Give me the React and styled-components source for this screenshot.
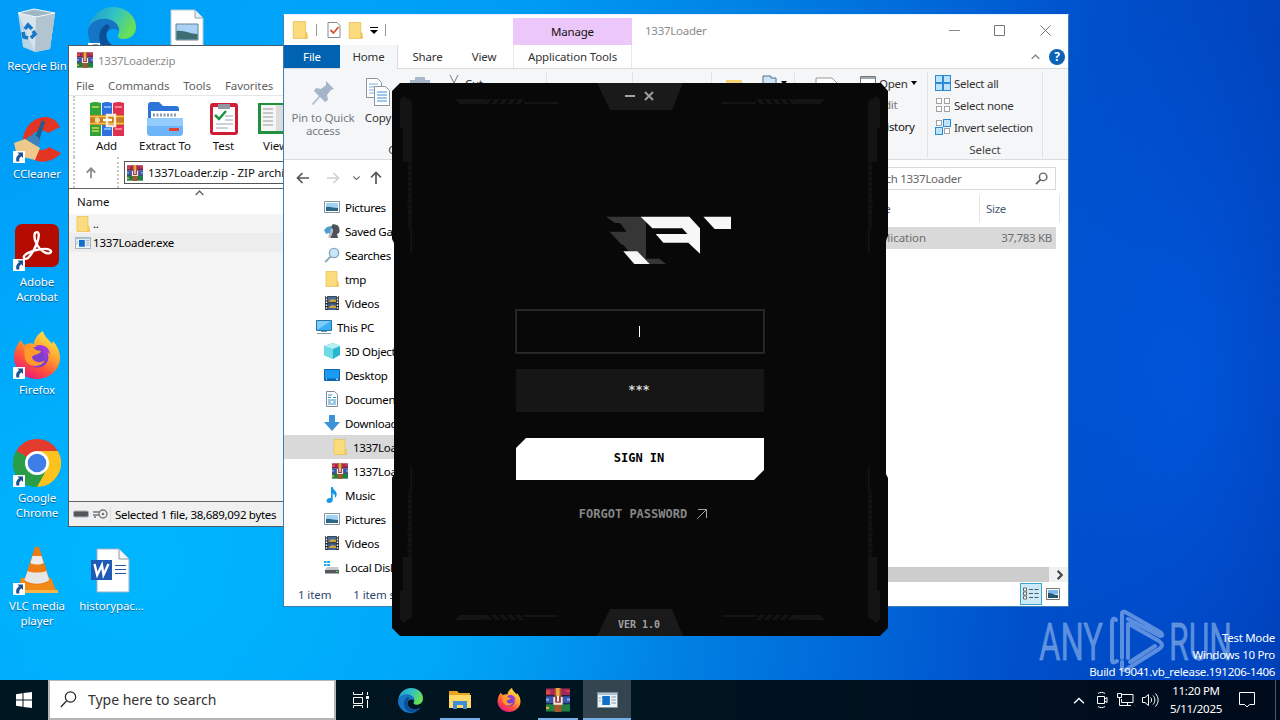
import React from 'react';
import styled, { createGlobalStyle, css } from 'styled-components';

const uiFont = '"Noto Sans", "Open Sans", sans-serif';
const monoFont = '"DejaVu Sans Mono", "Liberation Mono", monospace';

const GlobalStyle = createGlobalStyle`
    * { box-sizing: border-box; }
    body {
        margin: 0;
        overflow: hidden;
        font-family: ${uiFont};
        font-size: 11.5px;
        letter-spacing: -0.3px;
        color: #111;
    }
    svg { display: block; flex: none; }
`

/* ---------- icons ---------- */

const Folder = ({ size = 16 }) => (
    <svg width={size} height={size} viewBox="0 0 16 16">
        <path d="M2 .5h11v12l1.500 1v2H2z" fill="#fbdc7c" stroke="#e6bd52" strokeWidth=".7" />
        <path d="M13 9.500l1.700 1v5H12" fill="#f3c95c" />
    </svg>
)

const Rar = ({ size = 16 }) => (
    <svg width={size} height={size} viewBox="0 0 16 16">
        <path d="M0 .3h16v5H0z" fill="#a3265c" />
        <path d="M0 5.500h16v5H0z" fill="#3957a8" />
        <path d="M0 10.700h16v5H0z" fill="#238044" />
        <path d="M0 1.500h3V4H0zM13 1.500h3v1h-3z" fill="#dc4a3c" />
        <path d="M0 7h2v1.500H0zM14 7h2v1.500h-2z" fill="#8aa9e8" />
        <path d="M0 12.500h2V14H0z" fill="#d4b537" />
        <path d="M0 5h16M0 10.500h16" stroke="#20202c" strokeWidth=".6" />
        <path d="M5.700 0h4.600v16H5.700z" fill="#a5562a" />
        <path d="M6.700 0h2.400v5H6.700z" fill="#f1a63b" />
        <path d="M5.500 6v4.500h5V6" fill="#a33" stroke="#f4e9df" strokeWidth="1.200" />
        <path d="M8 5v4" stroke="#fff" strokeWidth="1.200" />
    </svg>
)

const Exe = ({ width = 16, height = 12 }) => (
    <svg width={width} height={height} viewBox="0 0 22 16" preserveAspectRatio="none">
        <path d="M.5.5h21v15H.5z" fill="#eef4f8" stroke="#7f93a3" />
        <path d="M1 1h20v2H1z" fill="#a9c4d6" />
        <path d="M5.500 4h8v9h-8z" fill="#0f6fc9" />
        <path d="M15 5h5M15 8h5M15 11h5M2 6h2M2 9h2" stroke="#8293a0" />
    </svg>
)

const Picture = () => (
    <svg width="16" height="16" viewBox="0 0 16 16">
        <path d="M.5 2.500h15v11H.5z" fill="#fff" stroke="#8795a1" />
        <path d="M2 4h12v8H2z" fill="#9fd3f5" />
        <path d="M2 8c4-1 7 1 12 1v3H2z" fill="#2f6787" />
    </svg>
)

const Film = () => (
    <svg width="16" height="16" viewBox="0 0 16 16">
        <path d="M1 1h14v14H1z" fill="#2c3036" />
        <path d="M4 1.600h8v5.700H4z" fill="#4a6c9b" />
        <path d="M4 8.300h8V15H4z" fill="#3d5d8e" />
        <path d="M5 6l3-2 4 1v2H5zM5 12l3-2 4 1v2H5z" fill="#c9a536" />
        <path d="M2.500 1v14M13.500 1v14" stroke="#fff" strokeWidth="1.400" strokeDasharray="1.500 1.300" />
    </svg>
)

const Search = ({ size = 16, color = '#8aa5b8', fill = '#c8e8fb', w = 1.4 }) => (
    <svg width={size} height={size} viewBox="0 0 16 16">
        <circle cx="10" cy="6" r="4.600" fill={fill} stroke={color} strokeWidth={w} />
        <path d="M6.700 9.500L1.200 15" stroke={color} strokeWidth={w + 0.4} />
    </svg>
)

const Games = () => (
    <svg width="16" height="16" viewBox="0 0 16 16">
        <path d="M0 7l3-3 4-1 1 5-2 4-1-2-3 1z" fill="#4f9fd4" />
        <path d="M7 4l2-3 4 1c3 2 3 6 2 8l-2 1 1 4H6l2-4z" fill="#4e5359" />
        <path d="M7 5l2 1v3l-3 6-2-1 2-4z" fill="#b4bcc2" />
    </svg>
)

const Monitor = () => (
    <svg width="16" height="16" viewBox="0 0 16 16">
        <path d="M.5 1.500h15v10H.5z" fill="#38b0f2" stroke="#2274a8" />
        <path d="M1 2h14L1 11z" fill="#7bcdf8" />
        <path d="M5 12h6v1H5zM1 14h14v1H1z" fill="#7d99ac" />
    </svg>
)

const Cube = () => (
    <svg width="16" height="16" viewBox="0 0 16 16">
        <path d="M0 3l9-3 7 3v9l-7 4-9-4z" fill="#29b7cf" />
        <path d="M0 3l9 3v10l-9-4z" fill="#6fdbe6" />
        <path d="M0 3l9-3 7 3-7 3z" fill="#b7f0f4" />
    </svg>
)

const DesktopIcon = () => (
    <svg width="16" height="16" viewBox="0 0 16 16">
        <path d="M.5 2.500h15v11H.5z" fill="#1a9bf1" stroke="#0b67ae" />
        <path d="M1 11.500h14V13H1z" fill="#0b62b0" />
        <path d="M2 12.200h1M12 12.200h2" stroke="#fff" />
    </svg>
)

const DocumentIcon = () => (
    <svg width="16" height="16" viewBox="0 0 16 16">
        <path d="M2.500.5h8l3 3v12h-11z" fill="#fff" stroke="#7c8b97" />
        <path d="M4 4h4M4 6.500h3M9 6.500h3M4 9h8M4 11h3M9 11h3M4 13h8" stroke="#3991c6" strokeWidth="1.200" />
    </svg>
)

const Download = () => (
    <svg width="16" height="16" viewBox="0 0 16 16">
        <path d="M5 0h6v7h5l-8 9-8-9h5z" fill="#3b92d8" />
    </svg>
)

const MusicIcon = () => (
    <svg width="16" height="16" viewBox="0 0 16 16">
        <path d="M7 0h1.700c.5 3 4 4 4 7 0 2-.7 3-1.700 4 .4-3-1-4-2.300-4.500V13c0 2-1.700 3-3.500 3S2.500 15 2.500 13.500 4.500 10.500 7 11z" fill="#1698e5" />
    </svg>
)

const Drive = () => (
    <svg width="16" height="16" viewBox="0 0 16 16">
        <path d="M0 2h2.500v2H0zM3.200 2H6v2H3.200zM0 5h2.500v2H0zM3.200 5H6v2H3.200z" fill="#18a9ea" />
        <path d="M3 8h11l1 3H1z" fill="#c5c9cc" />
        <path d="M1 11h14v3.500H1z" fill="#53585c" />
        <path d="M12 12.500h2" stroke="#4fe06a" />
    </svg>
)

const Edge = ({ size = 24 }) => (
    <svg width={size} height={size} viewBox="0 0 48 48">
        <defs>
            <linearGradient id="edgeTop" x1="0" y1="0" x2="1" y2=".4">
                <stop offset="0" stopColor="#1f96d0" />
                <stop offset=".55" stopColor="#32c3c4" />
                <stop offset="1" stopColor="#67df57" />
            </linearGradient>
        </defs>
        <path d="M1 21C3 8 13 0 25 0c13 0 23 9 23 20 0 8-6 12-12 12-5 0-7-2-6-4 3-4 1-13-9-13C11 15 3 18 1 21z" fill="url(#edgeTop)" />
        <path d="M0 24c1-8 9-13 19-12 8 1 12 6 12 12-6-5-15 0-13 9 2 8 11 11 23 6-5 7-12 10-19 9C9 47 0 37 0 24z" fill="#1576c6" />
        <path d="M19 17c-8 4-10 14-5 22 3 5 8 8 13 8 8-1 14-4 17-10-6 4-14 5-20 1-7-5-7-13-2-18-1-2-2-2-3-3z" fill="#0d4f97" />
    </svg>
)

const Firefox = ({ size = 24 }) => (
    <svg width={size} height={size} viewBox="0 0 48 48">
        <defs>
            <linearGradient id="foxBody" x1=".85" y1="0" x2=".25" y2="1">
                <stop offset="0" stopColor="#fff24a" />
                <stop offset=".4" stopColor="#ffa52f" />
                <stop offset=".7" stopColor="#ff4f3c" />
                <stop offset="1" stopColor="#e31587" />
            </linearGradient>
        </defs>
        <path d="M8 9c1 3 2 4 4 5 3-2 7-2 9-1 0-5 4-10 9-13 1 6 6 8 9 13l1-3c5 6 7 11 7 17C47 39 36 48 24 48S1 39 1 26C1 20 4 13 8 9z" fill="url(#foxBody)" />
        <circle cx="25" cy="26" r="10.500" fill="#7b3fd0" />
        <path d="M11 17c4-3 9-2 12 2l5 1c-1 4-7 3-9 6 1 5 8 7 13 3-3 8-17 8-20-1-1-4 0-7-1-11z" fill="#ff9a2c" />
        <path d="M22 15c8-3 15 2 15 9-1-2-2-3-3-3 1 4 0 7-2 9 0-7-3-13-10-15z" fill="#a43ad6" />
    </svg>
)

const Chrome = () => (
    <svg width="48" height="48" viewBox="0 0 48 48">
        <path d="M24 24L3.200 12A24 24 0 0 1 44.800 12z" fill="#e33b2e" />
        <path d="M24 24L44.800 12A24 24 0 0 1 24 48z" fill="#fcc31e" />
        <path d="M24 24v24A24 24 0 0 1 3.200 12z" fill="#2a9d48" />
        <path d="M24 12h20.800L34 30 24 48z" fill="#fcc31e" />
        <path d="M3.200 12L14 30l10 6 10-6-10 18A24 24 0 0 1 3.200 12z" fill="#2a9d48" />
        <circle cx="24" cy="24" r="12" fill="#fff" />
        <circle cx="24" cy="24" r="9.300" fill="#3f7de8" />
    </svg>
)

const RecycleBin = () => (
    <svg width="48" height="48" viewBox="0 0 48 48">
        <path d="M5 6l16-4 21 4-5 36-15 3-12-5z" fill="#c7d8e2" opacity=".93" />
        <path d="M5 6l18 4 19-4-5 36-15 3z" fill="#dfe8ed" opacity=".75" />
        <path d="M23 10l19-4-5 36-15 3z" fill="#a9bcc9" opacity=".8" />
        <path d="M5 6l16-4 21 4-19 4z" fill="#9fb7c5" stroke="#f2f7fa" />
        <g fill="none" stroke="#1878c8" strokeWidth="3.600">
            <path d="M12 22l3-4 4 4" />
            <path d="M10 25l1 5 4 1" />
            <path d="M18 31l4-4-2-3" />
        </g>
    </svg>
)

const CCleaner = () => (
    <svg width="48" height="48" viewBox="0 0 48 48">
        <path d="M47 12L35 18c-6-6-17-2-17 8 1 9 11 12 18 6l12 6C40 48 22 51 13 38 4 22 16 1 34 2c6 1 10 4 13 10z" fill="#e33424" />
        <path d="M29 5l3 2-6 19-5-2z" fill="#245d8c" />
        <path d="M15 22c5-4 12-1 12 5l-3 6-12-8z" fill="#3b83b8" />
        <path d="M1 28l11-4 15 9-5 12-8-2-10-2z" fill="#efc98b" />
    </svg>
)

const Acrobat = () => (
    <svg width="48" height="48" viewBox="0 0 48 48">
        <rect x="2" y="1" width="44" height="43" rx="7" fill="#b30b00" />
        <path d="M22 10c4-3 5 2 2 10-2 6-6 12-9 15-3 2-6 0-3-3 4-4 20-8 25-5 3 2-1 5-6 2-7-4-11-14-9-19z" fill="none" stroke="#fff" strokeWidth="2.400" />
    </svg>
)

const Vlc = () => (
    <svg width="48" height="48" viewBox="0 0 48 48">
        <path d="M8 31h30l6 15H4z" fill="#f48a16" />
        <path d="M4 43h41v3H4z" fill="#fbb34b" />
        <path d="M22 0h4l11 34c-6 5-20 5-26 0z" fill="#ef7b12" />
        <path d="M19.500 9h9l2.200 7c-4 2-9 2-13.400 0z" fill="#ececec" />
        <path d="M14.700 24c5 2 13 2 18.600 0l3 9c-6 5-19 5-25 0z" fill="#e6e6e6" />
    </svg>
)

const WordFile = () => (
    <svg width="48" height="48" viewBox="0 0 48 48">
        <path d="M9 2h22l10 10v33H9z" fill="#fff" stroke="#9db1c7" />
        <path d="M31 2v10h10" fill="#f5f5f5" stroke="#8796a6" />
        <path d="M27 18.500h11M27 22.500h11M27 26.500h11" stroke="#2b579a" />
        <path d="M3 13h21v20H3z" fill="#1f5bb5" />
        <path d="M6.500 17l2.700 11 4.700-10 1.600 10 5-11" fill="none" stroke="#fff" strokeWidth="2.400" />
    </svg>
)

const ImageFile = () => (
    <svg width="48" height="48" viewBox="0 0 48 48">
        <path d="M8 3h24l8 8v37H8z" fill="#fff" stroke="#b8c8d4" />
        <path d="M32 3v8h8" fill="#e7edf1" stroke="#8fa3b2" />
        <path d="M13 17h22v16H13z" fill="#a9d2f4" stroke="#6c8192" />
        <path d="M13.500 24c8-1 13 3 21 3v5.500h-21z" fill="#3d6e74" />
    </svg>
)

const ShortcutArrow = () => (
    <svg width="12" height="12" viewBox="0 0 12 12">
        <path d="M0 0h12v12H0z" fill="#fff" />
        <path d="M4.500 1.500H10V7L8.300 5.300C6.500 6.500 6 8 6.300 10.500H3.500C2.500 7 4 4.500 6.200 3.300z" fill="#1c5192" />
    </svg>
)

const Books = () => (
    <svg width="34" height="34" viewBox="0 0 34 34">
        <path d="M0 1q5.500-2 11 0v33H0z" fill="#2fa43c" />
        <path d="M12 1q5-2 10 0v33H12z" fill="#2f6fe0" />
        <path d="M23 1q5.500-2 11 0v33H23z" fill="#e0304f" />
        <path d="M2 5h7M2 26h7M2 29h7" stroke="#d8d84b" strokeWidth="1.600" />
        <path d="M14 5h7M14 27h7" stroke="#93d1ff" strokeWidth="1.600" />
        <path d="M25 5h7M25 27h7" stroke="#ff9fb2" strokeWidth="1.600" />
        <path d="M0 13h34v10H0z" fill="#c97a1c" />
        <path d="M0 14.500h34M0 21.500h34" stroke="#f7c24c" strokeWidth="1.500" />
        <path d="M5 16c3-2 5 0 5 2s-2 4-5 2z" fill="#f0d9a0" />
        <path d="M17 13h8v11h-8z" fill="none" stroke="#f6ecd9" strokeWidth="2.500" />
        <path d="M13 18h9" stroke="#fff" strokeWidth="2.500" />
    </svg>
)

const ExtractIcon = () => (
    <svg width="36" height="34" viewBox="0 0 36 34">
        <path d="M1 3c0-2 1-3 3-3h8l4 4h13c2 0 3 1 3 3v14H1z" fill="#2d74d8" />
        <path d="M4 9h28v10H4z" fill="#fff" />
        <path d="M6 13h24" stroke="#8598ad" strokeWidth="3" strokeDasharray="2 1.500" />
        <path d="M0 16h36v14c0 3-1 4-4 4H4c-3 0-4-1-4-4z" fill="#6db4f8" />
        <path d="M0 16h36v8H0z" fill="#93ccfd" />
        <path d="M22 26h10v3H22z" fill="#e5412f" />
    </svg>
)

const TestIcon = () => (
    <svg width="28" height="34" viewBox="0 0 28 34">
        <rect x="0" y="1" width="28" height="32" rx="3" fill="#d01c34" />
        <path d="M3 5h22v25H3z" fill="#fff" />
        <path d="M8 2h12v5H8z" fill="#8e99a4" />
        <path d="M5 13l4 4 7-8" fill="none" stroke="#1e9142" strokeWidth="2.500" />
        <path d="M15 14h8M15 18h8M6 22h17M6 26h12" stroke="#99a4ae" />
    </svg>
)

const ViewIcon = () => (
    <svg width="36" height="34" viewBox="0 0 36 34">
        <path d="M0 1h36v31H0z" fill="#22913e" />
        <path d="M3 3h15v26H3z" fill="#f5f5f5" />
        <path d="M18 3h15v26H18z" fill="#dcdcdc" />
        <path d="M5 7h10M5 11h10M5 15h10M5 19h10M5 23h10" stroke="#9a9a9a" />
        <path d="M25 1h6v11h-6z" fill="#c7283c" />
    </svg>
)

const Arrow = ({ size = 14, color = '#555', turn = 0, w = 1.7 }) => (
    <svg width={size} height={size} viewBox="0 0 14 14">
        <path d="M13 7H1.500M6.500 2l-5 5 5 5" fill="none" stroke={color} strokeWidth={w} transform={`rotate(${turn} 7 7)`} />
    </svg>
)

const Chevron = ({ width = 8, color = '#666', up, w = 1.3 }) => (
    <svg width={width} height={width / 2 + 1} viewBox="0 0 8 5">
        <path d={up ? 'M.5 4.500L4 1l3.500 3.500' : 'M.5.5L4 4 7.500.5'} fill="none" stroke={color} strokeWidth={w} />
    </svg>
)

const Caret = () => <svg width="6" height="4"><path d="M0 0h6L3 4z" /></svg>

/* ---------- desktop ---------- */

const Desktop = styled.div`
    position: relative;
    display: flex;
    flex-direction: column;
    width: 1280px;
    height: 720px;
    overflow: hidden;
    background:
        radial-gradient(ellipse 180px 380px at 1190px 380px, rgba(0, 105, 255, 0.4), rgba(0, 90, 240, 0)),
        radial-gradient(ellipse 560px 420px at 120px 560px, rgba(0, 184, 255, 0.9), rgba(0, 184, 255, 0)),
        linear-gradient(97deg, #009df8 0%, #00a4fa 20%, #009cf4 38%, #0083e4 54%, #0068d8 68%, #0050cc 80%, #003eb6 100%);
`

const IconGrid = styled.div`
    flex: 1;
    display: grid;
    grid-template-columns: 74px 75px 75px;
    grid-template-rows: repeat(6, 108px);
    padding-top: 7px;
`

const Shortcut = styled.div`
    grid-column: ${({ $col }) => $col};
    grid-row: ${({ $row }) => $row};
    display: flex;
    flex-direction: column;
    align-items: center;
    color: #fff;
    line-height: 15px;
    text-align: center;
    text-shadow: 0 1px 1px rgba(0, 30, 70, 0.6);
    letter-spacing: -0.1px;
    white-space: pre-line;
    > div {
        position: relative;
        height: 51px;
    }
    > div > svg + svg {
        position: absolute;
        left: 0;
        bottom: 3px;
    }
`

const icons = [
    { col: 1, row: 1, name: 'Recycle Bin', icon: <RecycleBin />, plain: true },
    { col: 1, row: 2, name: 'CCleaner', icon: <CCleaner /> },
    { col: 1, row: 3, name: 'Adobe\nAcrobat', icon: <Acrobat /> },
    { col: 1, row: 4, name: 'Firefox', icon: <Firefox size={48} /> },
    { col: 1, row: 5, name: 'Google\nChrome', icon: <Chrome /> },
    { col: 1, row: 6, name: 'VLC media\nplayer', icon: <Vlc /> },
    { col: 2, row: 1, name: '', icon: <Edge size={48} /> },
    { col: 2, row: 6, name: 'historypac...', icon: <WordFile />, plain: true },
    { col: 3, row: 1, name: '', icon: <ImageFile />, plain: true },
]

const Window = styled.div`
    position: absolute;
    left: ${({ $x }) => $x}px;
    top: ${({ $y }) => $y}px;
    width: ${({ $w }) => $w}px;
    height: ${({ $h }) => $h}px;
    display: flex;
    flex-direction: column;
    background: #fff;
    overflow: hidden;
    white-space: nowrap;
`

const Row = styled.div`
    display: flex;
    align-items: center;
    gap: ${({ $gap = 0 }) => $gap}px;
    height: ${({ $h }) => $h}px;
    flex: none;
`

const Text = styled.span`
    color: ${({ $c }) => $c || 'inherit'};
    letter-spacing: ${({ $ls }) => ($ls === undefined ? 'inherit' : `${$ls}px`)};
`

/* ---------- archive window ---------- */

const ArchiveWindow = styled(Window)`
    border: 1px solid #4f5b63;
`

const ArchiveTitle = styled(Row)`
    padding: 0 0 2px 8px;
    color: #8c8c8c;
    letter-spacing: -0.25px;
`

const ArchiveMenu = styled(Row)`
    padding-left: 7px;
    gap: 14px;
    color: #5f5f5f;
    border-bottom: 1px solid #e6e6e6;
    letter-spacing: -0.08px;
`

const Grip = styled.div`
    width: 0;
    align-self: stretch;
    border-left: 2px dotted #c9c9b4;
`

const Toolbar = styled(Row)`
    padding-left: 4px;
`

const Tool = styled.div`
    width: ${({ $w = 59 }) => $w}px;
    flex: none;
    display: flex;
    flex-direction: column;
    align-items: center;
    gap: 2px;
    padding-top: ${({ $w }) => ($w > 40 ? 3 : 0)}px;
    letter-spacing: -0.1px;
    line-height: 16px;
`

const Gap = styled.div`
    width: 11px;
`

const ArchivePath = styled.div`
    display: flex;
    align-items: center;
    gap: 5px;
    width: 270px;
    height: 23px;
    margin-left: 5px;
    padding-left: 2px;
    border: 1px solid #555;
`

const ArchiveList = styled.div`
    flex: 1;
    display: flex;
    flex-direction: column;
    background: #f5f5f5;
    border-top: 1px solid #646464;
    border-bottom: 1px solid #646464;
`

const ListHeader = styled(Row)`
    padding-left: 8px;
    background: #fff;
    > svg {
        margin: 0 0 17px 86px;
    }
`

const ListRow = styled(Row)`
    padding-left: 6px;
    gap: 2px;
    color: #000;
    background: ${({ $bg }) => $bg};
`

const ArchiveStatus = styled(Row)`
    padding-left: 4px;
    background: #f0f0f0;
    color: #000;
    > span {
        margin-left: 1px;
        padding-left: 4px;
        border-left: 1px solid #dcdcdc;
    }
`

const Archive = () => (
    <ArchiveWindow $x={68} $y={45} $w={420} $h={482}>
        <ArchiveTitle $h={30} $gap={5}>
            <Rar />
            <span>1337Loader.zip</span>
        </ArchiveTitle>
        <ArchiveMenu $h={20}>
            <span>File</span><span>Commands</span><span>Tools</span><span>Favorites</span>
        </ArchiveMenu>
        <Toolbar $h={61}>
            <Grip />
            <Tool $w={63}><Books />Add</Tool>
            <Tool $w={54}><ExtractIcon />Extract To</Tool>
            <Tool $w={63}><TestIcon />Test</Tool>
            <Tool $w={41}><ViewIcon />View</Tool>
        </Toolbar>
        <Toolbar $h={31}>
            <Grip />
            <Tool $w={31}><Arrow turn={90} size={12} color="#868686" w={2} /></Tool>
            <Gap />
            <Grip />
            <ArchivePath><Rar /><Text $ls={-0.05}>1337Loader.zip - ZIP archive, unpacked size</Text></ArchivePath>
        </Toolbar>
        <ArchiveList>
            <ListHeader $h={25}>
                <Text $ls={0}>Name</Text><Chevron up width={9} />
            </ListHeader>
            <ListRow $h={19} $bg="#f4f4f4"><Folder />..</ListRow>
            <ListRow $h={19} $bg="#ededed"><Exe /><Text $ls={-0.2}>1337Loader.exe</Text></ListRow>
        </ArchiveList>
        <ArchiveStatus $h={24}>
            <svg width="36" height="12" viewBox="0 0 36 12">
                <rect x=".5" y="3" width="15" height="6" rx="1.500" fill="#53585c" stroke="#b0b0b0" />
                <circle cx="30" cy="6" r="4" fill="#eee" stroke="#777" strokeWidth="1.400" />
                <circle cx="30" cy="6" r="1.300" fill="#777" />
                <path d="M20 4h6M20 7h6M22 8v2" stroke="#777" strokeWidth="1.600" />
            </svg>
            <span>Selected 1 file, 38,689,092 bytes</span>
        </ArchiveStatus>
    </ArchiveWindow>
)

/* ---------- file explorer ---------- */

const ExplorerWindow = styled(Window)`
    border: 1px solid #3f7fb0;
    border-top-color: #e6f2fb;
`

const TitleBar = styled.div`
    display: grid;
    grid-template-columns: 229px 119px 1fr 44px 46px 46px;
    height: 30px;
    flex: none;
    align-items: center;
    > svg { justify-self: center; }
`

const QuickAccess = styled.div`
    display: flex;
    align-items: center;
    padding-left: 7px;
    > svg + svg { margin-left: 6px; }
    > i {
        width: 1px;
        height: 12px;
        margin: 0 10px 0 6px;
        background: #999;
    }
    > svg + i { margin-left: 7px; }
`

const ManageTab = styled.div`
    align-self: end;
    height: 27px;
    padding-top: 6px;
    text-align: center;
    background: #ecc7f9;
    letter-spacing: -0.2px;
`

const WindowTitle = styled.span`
    padding-left: 13px;
    color: #8b8b8b;
    letter-spacing: -0.25px;
`

const TabBar = styled.div`
    display: flex;
    height: 24px;
    flex: none;
    border-bottom: 1px solid #dadbdc;
`

const Tab = styled.div`
    width: ${({ $w }) => $w}px;
    line-height: 23px;
    text-align: center;
    letter-spacing: -0.15px;
    color: #333;
    ${({ $kind }) => $kind === 'file' && css`
        background: #0063b1;
        color: #fff;
    `}
    ${({ $kind }) => $kind === 'active' && css`
        height: 24px;
        background: #f5f6f7;
        border-right: 1px solid #dadbdc;
    `}
    ${({ $kind }) => $kind === 'tools' && css`
        margin-left: 2px;
        border: solid #ece5ef;
        border-width: 0 1px;
    `}
`

const TabEnd = styled.div`
    flex: 1;
    display: flex;
    align-items: center;
    justify-content: flex-end;
    gap: 9px;
    padding-right: 3px;
`

const Help = styled.div`
    width: 16px;
    height: 16px;
    border-radius: 50%;
    background: #0a63b3;
    color: #fff;
    font: bold 12px/16px ${uiFont};
    text-align: center;
`

const Ribbon = styled.div`
    display: flex;
    height: 91px;
    flex: none;
    padding: 3px 0 1px;
    background: #f5f6f7;
    border-bottom: 1px solid #dadbdc;
`

const Group = styled.div`
    position: relative;
    display: flex;
    width: ${({ $w }) => $w}px;
    flex: none;
    padding-left: ${({ $pad = 0 }) => $pad}px;
    border-right: 1px solid #e2e3e4;
    > footer {
        position: absolute;
        left: 0;
        right: ${({ $shift = 0 }) => $shift}px;
        bottom: 0;
        line-height: 16px;
        text-align: center;
        color: #444;
        letter-spacing: -0.1px;
    }
`

const BigButton = styled.div`
    width: ${({ $w }) => $w}px;
    display: flex;
    flex-direction: column;
    align-items: center;
    padding-top: 4px;
    line-height: 13px;
    text-align: center;
    color: ${({ $c = '#333' }) => $c};
    letter-spacing: -0.15px;
    white-space: pre-line;
    > svg { margin-bottom: 3px; }
`

const SmallButtons = styled.div`
    display: flex;
    flex-direction: column;
    padding-left: ${({ $pad = 0 }) => $pad}px;
    > div {
        display: flex;
        align-items: center;
        gap: 3px;
        height: 22px;
        color: #333;
        letter-spacing: -0.28px;
    }
    > p {
        margin: 0;
        padding-left: 18px;
        line-height: 22px;
    }
`

const PasteIcon = styled.svg`
    margin-top: ${({ $mt = 0 }) => $mt}px;
`

const AddressRow = styled(Row)`
    padding: 1px 12px 0 12px;
    > svg { margin-right: 16px; }
    > svg + svg { margin-right: 13px; }
    > svg + svg + svg { margin-right: 9px; }
`

const AddressBox = styled.div`
    flex: 1;
    height: 23px;
    border: 1px solid #d9d9d9;
`

const SearchBox = styled(AddressBox)`
    flex: none;
    display: flex;
    align-items: center;
    justify-content: space-between;
    width: 211px;
    margin-left: 12px;
    padding: 0 7px 0 17px;
    color: #666;
`

const Body = styled.div`
    flex: 1;
    display: flex;
    min-height: 0;
`

const NavPane = styled.div`
    width: 180px;
    flex: none;
    overflow: hidden;
`

const NavItem = styled.div`
    display: flex;
    align-items: center;
    gap: 5px;
    height: 24px;
    padding-left: ${({ $depth }) => 24 + $depth * 8}px;
    background: ${({ $on }) => ($on ? '#d9d9d9' : 'transparent')};
    color: #000;
`

const FilePane = styled.div`
    flex: 1;
    display: flex;
    flex-direction: column;
`

const FileRow = styled.div`
    display: grid;
    grid-template-columns: 399px 117px 80px;
    height: ${({ $h }) => $h}px;
    line-height: ${({ $h }) => $h}px;
    color: ${({ $head }) => ($head ? '#4c607a' : '#6d6d6d')};
    > span { padding-left: ${({ $head }) => ($head ? 6 : 3)}px; }
    > span + span { padding-left: 3px; }
    > span + span + span { padding-left: 6px; }
    ${({ $head }) => ($head ? css`
        > span { border-right: 1px solid #e5e5e5; }
    ` : css`
        grid-template-columns: 399px 117px 1fr;
        margin: 5px 12px 0 0;
        background: #d9d9d9;
        letter-spacing: -0.05px;
    `)}
`

const SizeCell = styled.span`
    text-align: right;
    padding-right: 4px;
    letter-spacing: -0.3px;
`

const ScrollBar = styled.div`
    display: flex;
    align-items: center;
    height: 15px;
    margin-top: auto;
    background: #f0f0f0;
    &::before {
        content: '';
        flex: 1;
        height: 15px;
        background: #cdcdcd;
    }
    > svg { margin: 0 3px 0 6px; transform: rotate(-90deg); }
`

const StatusBar = styled(Row)`
    padding: 0 8px 0 14px;
    color: #2b4770;
    gap: 22px;
    letter-spacing: -0.1px;
    > div { margin-left: auto; display: flex; align-items: center; gap: 4px; }
`

const ViewToggle = styled.div`
    width: 22px;
    height: 22px;
    display: grid;
    place-items: center;
    background: #cbe9f7;
    border: 1px solid #3aa5c9;
`

const nav = [
    [2, <Picture />, 'Pictures'],
    [2, <Games />, 'Saved Games'],
    [2, <Search />, 'Searches'],
    [2, <Folder />, 'tmp'],
    [2, <Film />, 'Videos'],
    [1, <Monitor />, 'This PC'],
    [2, <Cube />, '3D Objects'],
    [2, <DesktopIcon />, 'Desktop'],
    [2, <DocumentIcon />, 'Documents'],
    [2, <Download />, 'Downloads'],
    [3, <Folder />, '1337Loader', true],
    [3, <Rar />, '1337Loader.zip'],
    [2, <MusicIcon />, 'Music'],
    [2, <Picture />, 'Pictures'],
    [2, <Film />, 'Videos'],
    [2, <Drive />, 'Local Disk (C:)'],
]

// filled squares of the 2x2 selection icons
const SelectIcon = ({ on }) => (
    <svg width="16" height="16" viewBox="0 0 16 16">
        {[[0, 0], [8, 0], [0, 8], [8, 8]].map(([x, y], i) => (
            on[i]
                ? <rect key={i} x={x + 0.5} y={y + 0.5} width="7" height="7" fill="#bfe3fb" stroke="#2b8ad6" />
                : <rect key={i} x={x + 1.5} y={y + 1.5} width="5" height="5" fill="#fff" stroke="#a2a2a2" />
        ))}
    </svg>
)

const Explorer = () => (
    <ExplorerWindow $x={283} $y={14} $w={786} $h={593}>
        <TitleBar>
            <QuickAccess>
                <Folder size={18} /><i />
                <svg width="14" height="16" viewBox="0 0 14 16">
                    <path d="M1 .5h9l3 3v12H1z" fill="#fff" stroke="#808b95" />
                    <path d="M3.500 8l3 3 5-6" fill="none" stroke="#d6532c" strokeWidth="1.800" />
                </svg>
                <Folder size={17} />
                <svg width="8" height="7" viewBox="0 0 8 7"><path d="M0 0h8v1H0zM0 3h8L4 7z" /></svg>
                <i />
            </QuickAccess>
            <ManageTab>Manage</ManageTab>
            <WindowTitle>1337Loader</WindowTitle>
            <svg width="11" height="11"><path d="M0 5.500h11" stroke="#888" /></svg>
            <svg width="11" height="11"><path d="M.5.5h10v10H.5z" fill="none" stroke="#777" /></svg>
            <svg width="11" height="11"><path d="M.5.5l10 10M10.500.5l-10 10" stroke="#777" /></svg>
        </TitleBar>
        <TabBar>
            <Tab $w={56} $kind="file">File</Tab>
            <Tab $w={58} $kind="active">Home</Tab>
            <Tab $w={59}>Share</Tab>
            <Tab $w={54}>View</Tab>
            <Tab $w={119} $kind="tools">Application Tools</Tab>
            <TabEnd><Chevron up width={9} color="#888" /><Help>?</Help></TabEnd>
        </TabBar>
        <Ribbon>
            <Group $w={263} $shift={2}>
                <BigButton $w={78} $c="#737b84">
                    <svg width="32" height="32" viewBox="0 0 32 32">
                        <path d="M19 5l8 8-3 1-4 5 1 5-3 2-5-5-7 8-1-1 7-8-5-5 2-3 5 1 5-4z" fill="#a4b4c9" />
                    </svg>
                    {'Pin to Quick\naccess'}
                </BigButton>
                <BigButton $w={32}>
                    <svg width="26" height="32" viewBox="0 0 26 32">
                        <path d="M1.500 2.500h11l4 4v15h-15z" fill="#fff" stroke="#8a949d" />
                        <path d="M4 8h9M4 11h9M4 14h9M4 17h9" stroke="#7faee0" />
                        <path d="M9.500 10.500h11l4 4v15h-15z" fill="#fff" stroke="#8a949d" />
                        <path d="M12 16h10M12 19h10M12 22h10M12 25h10" stroke="#3f8be0" />
                    </svg>
                    Copy
                </BigButton>
                <BigButton $w={52}>
                    <svg width="22" height="32" viewBox="0 0 22 32"><path d="M1 4h5V1h10v3h5v25H1z" fill="#a9b6cb" /></svg>
                    Paste
                </BigButton>
                <SmallButtons>
                    <div>
                        <svg width="16" height="16" viewBox="0 0 16 16"><path d="M4 0l5 10M12 0L7 10" stroke="#777" fill="none" /></svg>
                        Cut
                    </div>
                </SmallButtons>
                <footer>Clipboard</footer>
            </Group>
            <Group $w={86} />
            <Group $w={79} />
            <Group $w={83} $pad={14}>
                <PasteIcon $mt={8} width="18" height="20" viewBox="0 0 18 20"><path d="M0 0h16v18H0z" fill="#f5d273" /></PasteIcon>
                <SmallButtons $pad={18}>
                    <div>
                        <svg width="16" height="16" viewBox="0 0 16 16"><path d="M1 1h8v2h5v12H4V9H1z" fill="#cfe6f7" stroke="#4c7288" /></svg>
                        <Caret />
                    </div>
                </SmallButtons>
            </Group>
            <Group $w={133} $pad={20}>
                <PasteIcon $mt={5} width="24" height="32" viewBox="0 0 24 32"><path d="M1 1h16l6 6v24H1z" fill="#fff" stroke="#999" /></PasteIcon>
                <SmallButtons $pad={21}>
                    <div>
                        <svg width="16" height="14" viewBox="0 0 16 14"><path d="M.5.5h15v13H.5z" fill="#fff" stroke="#777" /><path d="M1 1h14v2H1z" fill="#99a9b5" /></svg>
                        Open <Caret />
                    </div>
                    <p><Text $c="#777">Edit</Text></p>
                    <p>History</p>
                </SmallButtons>
            </Group>
            <Group $w={115} $pad={7}>
                <SmallButtons>
                    <div><SelectIcon on={[1, 1, 1, 1]} />Select all</div>
                    <div><SelectIcon on={[0, 0, 0, 0]} />Select none</div>
                    <div><SelectIcon on={[0, 1, 1, 0]} />Invert selection</div>
                </SmallButtons>
                <footer>Select</footer>
            </Group>
        </Ribbon>
        <AddressRow $h={35}>
            <Arrow />
            <Arrow turn={180} color="#d0d0d0" />
            <Chevron width={7} />
            <Arrow turn={90} />
            <AddressBox />
            <SearchBox>Search 1337Loader<Search size={13} color="#666" fill="none" w={1.8} /></SearchBox>
        </AddressRow>
        <Body>
            <NavPane>
                {nav.map(([depth, icon, name, on], i) => (
                    <NavItem key={i} $depth={depth} $on={on}>{icon}{name}</NavItem>
                ))}
            </NavPane>
            <FilePane>
                <FileRow $h={27} $head><span>Name</span><span>Type</span><span>Size</span></FileRow>
                <FileRow $h={22}><span>1337Loader.exe</span><span>Application</span><SizeCell>37,783 KB</SizeCell></FileRow>
                <ScrollBar><Chevron width={10} color="#444" w={1.800} /></ScrollBar>
            </FilePane>
        </Body>
        <StatusBar $h={24}>
            <span>1 item</span><span>1 item selected 36.8 MB</span>
            <div>
                <ViewToggle>
                    <svg width="16" height="14" viewBox="0 0 16 14">
                        <path d="M.5 1h3v3h-3zM.5 5h3v3h-3zM.5 9h3v3h-3z" fill="#fff" stroke="#666" />
                        <path d="M6 2.500h4M11.500 2.500h4M6 6.500h4M11.500 6.500h4M6 10.500h4M11.500 10.500h4" stroke="#556" />
                    </svg>
                </ViewToggle>
                <svg width="14" height="12" viewBox="0 0 14 12">
                    <path d="M.5.5h13v11H.5z" fill="#fff" stroke="#777" />
                    <path d="M2 2h10v4H2z" fill="#7cb9ee" />
                    <path d="M2 5c4 0 6 2 10 2v3H2z" fill="#24576f" />
                </svg>
            </div>
        </StatusBar>
    </ExplorerWindow>
)

/* ---------- login window ---------- */

const LoginWindow = styled.div`
    position: absolute;
    left: 392px;
    top: 83px;
    width: 496px;
    height: 553px;
    display: flex;
    flex-direction: column;
    align-items: center;
    background: #080808;
    font-family: ${monoFont};
    font-weight: 700;
    letter-spacing: 0;
    clip-path: polygon(8px 0, 489px 0, 100% 8px, 100% 153px, 494px 157px, 494px 391px, 100% 395px, 100% 545px, 488px 100%, 8px 100%, 0 545px, 0 395px, 2px 391px, 2px 160px, 0 156px, 0 8px);
`

const Frame = styled.svg`
    position: absolute;
    left: 0;
    top: 0;
`

const Notch = styled.div`
    position: relative;
    display: flex;
    justify-content: center;
    width: 86px;
    height: 27px;
    background: #1a1a1a;
    clip-path: ${({ $bottom }) => ($bottom
        ? 'polygon(13px 0, 75px 0, 86px 100%, 0 100%)'
        : 'polygon(0 0, 86px 0, 75px 100%, 13px 100%)')};
    ${({ $bottom }) => $bottom && css`
        margin-top: auto;
        padding-right: 2px;
        font-size: 10px;
        line-height: 31px;
        color: #a0a0a0;
    `}
`

const Logo = styled.svg`
    margin: 106px 0 0 57px;
`

const Field = styled.div`
    width: 248px;
    height: 43px;
    display: grid;
    place-items: center;
    padding-right: 2px;
    margin-top: ${({ $mt }) => $mt}px;
    color: #d8d8d8;
    font-size: 12px;
    line-height: 14px;
    ${({ $focus }) => ($focus
        ? css`box-shadow: inset 0 0 0 1px #2b2b2b, 0 0 0 1px #222;`
        : css`
            padding-bottom: 2px;
            background: #161616;
        `)}
`

const Cursor = styled.i`
    width: 1px;
    height: 11px;
    background: #fff;
`

const SignIn = styled.button`
    width: 248px;
    height: 42px;
    margin-top: 26px;
    padding: 0 2px 2px 0;
    border: 0;
    background: #fff;
    color: #000;
    font: 700 12px ${monoFont};
    clip-path: polygon(10px 0, 100% 0, 100% 32px, 238px 100%, 0 100%, 0 10px);
`

const Forgot = styled.div`
    display: flex;
    align-items: center;
    gap: 10px;
    margin: 26px 0 0 6px;
    color: #868686;
    font-size: 12px;
    line-height: 16px;
`

const Corner = () => (
    <g fill="#141414">
        <path d="M8 17l4-4 8 6v60h-9V45H8z" />
        <path d="M14 79h6v64l-3 4h-1V79z" fill="#0f0f0f" />
        <path d="M17.500 84v56" stroke="#151515" strokeWidth="4" strokeDasharray="2 3.500" />
        <path d="M18.500 144h1.500v26h-1.500z" />
        <path d="M62 16h30l4 5H68z" />
        <path d="M91 21l4-5h5l-4 5zM99 21l4-5h5l-4 5zM107 21l4-5h5l-4 5zM115 21l4-5h5l-4 5zM123 21l4-5h5l-4 5z" />
        <path d="M132 19h34v2h-34z" />
    </g>
)

const Login = () => (
    <LoginWindow>
        <Frame width="496" height="553" viewBox="0 0 496 553">
            <Corner />
            <g transform="translate(496 0) scale(-1 1)"><Corner /></g>
            <g transform="translate(0 553) scale(1 -1)"><Corner /></g>
            <g transform="translate(496 553) scale(-1 -1)"><Corner /></g>
        </Frame>
        <Notch>
            <svg width="36" height="27" viewBox="0 0 36 27">
                <path d="M4 13h10M24 9l8 8M32 9l-8 8" transform="translate(-1 0)" stroke="#a2a2a2" strokeWidth="1.800" />
            </svg>
        </Notch>
        <Logo width="127" height="49" viewBox="45 80 381 147">
            <path d="M48 82h106l14 16v110h40l20 16h-50l-46-38h-16l-16-20h-5L58 127h52L90 101H75z" fill="#363636" />
            <g fill="#f7f7f7">
                <path d="M152 82h146l32 35v76l-35-33h-75l-23-26h95l-15-17h-90z" />
                <path d="M340 82h83v37h-49z" />
                <path d="M100 186h42l37 38h-46z" />
            </g>
        </Logo>
        <Field $mt={45} $focus><Cursor /></Field>
        <Field $mt={16}>***</Field>
        <SignIn>SIGN IN</SignIn>
        <Forgot>
            FORGOT PASSWORD
            <svg width="10" height="10"><path d="M.5 9.500l9-9M1 .5h8.500V9" fill="none" stroke="#a5a5a5" /></svg>
        </Forgot>
        <Notch $bottom>VER 1.0</Notch>
    </LoginWindow>
)

/* ---------- watermark, taskbar ---------- */

const Watermark = styled.svg`
    position: absolute;
    left: 1030px;
    top: 600px;
`

const BuildInfo = styled.div`
    position: absolute;
    right: 5px;
    top: 629px;
    text-align: right;
    color: #fff;
    line-height: 17px;
    letter-spacing: -0.3px;
`

const TaskBar = styled.div`
    position: relative;
    display: flex;
    align-items: center;
    height: 40px;
    background: linear-gradient(90deg, #001722, #001420 50%, #000b1c);
`

const StartButton = styled.div`
    width: 48px;
    display: grid;
    place-items: center;
`

const TaskSearch = styled.div`
    display: flex;
    align-items: center;
    gap: 11px;
    width: 288px;
    height: 40px;
    padding-left: 10px;
    background: #fff;
    border: 2px solid #b6b6b6;
    border-top-width: 1px;
    color: #333;
    font-size: 14px;
    letter-spacing: -0.03px;
`

const Task = styled.div`
    width: ${({ $w = 49 }) => $w}px;
    height: 40px;
    display: grid;
    place-items: center;
    background: ${({ $active }) => ($active ? '#34454f' : 'transparent')};
    ${({ $open, $active }) => ($open || $active) && css`
        background-image: linear-gradient(#76aee8, #76aee8);
        background-repeat: no-repeat;
        background-position: bottom center;
        background-size: ${$active ? '48px' : '40px'} 2px;
    `}
`

const Tray = styled.div`
    display: flex;
    align-items: center;
    gap: 8px;
    height: 40px;
    margin-left: auto;
    color: #fff;
`

const Clock = styled.div`
    width: 58px;
    margin-right: 6px;
    text-align: center;
    line-height: 18px;
`

const TrayEnd = styled.div`
    width: 5px;
    height: 40px;
    margin-left: 12px;
    border-left: 1px solid #4a5a6c;
`

const Bar = () => (
    <TaskBar>
        <StartButton>
            <svg width="16" height="16" viewBox="0 0 16 16" fill="#fff">
                <path d="M0 2.200L6.500 1.300v6.200H0zM7.500 1.100L16 0v7.500H7.500zM0 8.500h6.500v6.200L0 13.800zM7.500 8.500H16V16l-8.500-1.100z" />
            </svg>
        </StartButton>
        <TaskSearch>
            <svg width="17" height="17" viewBox="0 0 17 17" fill="none" stroke="#222" strokeWidth="1.200">
                <circle cx="10.500" cy="6" r="5.200" /><path d="M6.500 10L.8 16" />
            </svg>
            Type here to search
        </TaskSearch>
        <Task $w={49}>
            <svg width="17" height="16" viewBox="0 0 17 16" fill="none" stroke="#fff">
                <path d="M1.500 0v2.500h9V0M1.500 5.500h9v6h-9zM1.500 16v-2.500h9V16M15.500 0v3M15.500 8v8" />
                <path d="M14 4h3v3h-3z" fill="#fff" stroke="none" />
            </svg>
        </Task>
        <Task $w={51}><Edge size={25} /></Task>
        <Task $w={48} $open>
            <svg width="22" height="20" viewBox="0 0 22 20">
                <path d="M0 1h8l2 2h11v15H0z" fill="#e8a320" />
                <path d="M0 5h22v13H0z" fill="#ffd867" />
                <path d="M4 11h14v8h-4v-4H8v4H4z" fill="#3b8fd2" />
            </svg>
        </Task>
        <Task $w={49}><Firefox /></Task>
        <Task $w={50} $open><Rar size={24} /></Task>
        <Task $w={48} $active><Exe width={21} height={16} /></Task>
        <Tray>
            <Chevron up width={12} color="#fff" w={1} />
            <svg width="16" height="18" viewBox="-2 0 16 18" fill="none" stroke="#fff">
                <path d="M2.500 5.500h7v7h-7zM9.500 8L12 6.500v5L9.500 10M3 2.500c2-1.500 5-1.500 7 0M3 15.500c2 1.500 5 1.500 7 0" />
            </svg>
            <svg width="17" height="16" viewBox="0 0 17 16" fill="none" stroke="#fff">
                <path d="M5 2.500h11v8H4.500V7M.5 1.500h4v4h-4zM2.500 5.500v8H8M10.500 10.500v3M7 13.500h7" />
            </svg>
            <svg width="17" height="16" viewBox="0 0 17 16" fill="none" stroke="#fff">
                <path d="M.5 5.500H3l3.500-3v11L3 10.500H.5zM8.500 5.500c1.500 1.500 1.500 3.500 0 5M11 3.500c2.500 2.500 2.500 6.500 0 9M13.500 1.500c3.500 4 3.500 9 0 13" />
            </svg>
            <Clock>11:20 PM<br />5/11/2025</Clock>
            <svg width="16" height="16" viewBox="0 0 16 16" fill="none" stroke="#fff">
                <path d="M.5.5h15v12h-5L8 15l-2.500-2.500h-5z" />
            </svg>
            <TrayEnd />
        </Tray>
    </TaskBar>
)

export default function App() {
    return (
        <>
            <GlobalStyle />
            <Desktop>
                <IconGrid>
                    {icons.map(({ col, row, name, icon, plain }) => (
                        <Shortcut key={`${col}-${row}`} $col={col} $row={row}>
                            <div>{icon}{!plain && <ShortcutArrow />}</div>
                            {name}
                        </Shortcut>
                    ))}
                </IconGrid>
                <Archive />
                <Explorer />
                <Login />
                <Watermark width="210" height="80" viewBox="0 0 210 80">
                    <g fill="#7ba6e6" fillOpacity=".75" stroke="#7ba6e6" strokeOpacity=".5" strokeWidth=".8" fontFamily="Roboto, sans-serif" fontSize="52" letterSpacing="0">
                        <text x="9" y="60" textLength="64" lengthAdjust="spacingAndGlyphs">ANY</text>
                        <text x="139" y="60" textLength="63" lengthAdjust="spacingAndGlyphs">RUN</text>
                    </g>
                    <g fill="none" stroke="#7ba6e6" strokeOpacity=".75" strokeWidth="4" strokeLinejoin="round" strokeLinecap="round">
                        <path d="M86 20c-3-3-4 0-4 3v37c0 3 2 3 5 1" />
                        <path d="M92 58V14c0-3 2-3 5-1l33 19c3 2 3 4 0 4L98 19M98 24v34M92 62v6c0 3 3 2 5 1l32-20c4-3 4-5 0-8l-30-17M100 62l25-16" />
                    </g>
                </Watermark>
                <BuildInfo>
                    Test Mode<br />Windows 10 Pro<br />Build 19041.vb_release.191206-1406
                </BuildInfo>
                <Bar />
            </Desktop>
        </>
    );
}
